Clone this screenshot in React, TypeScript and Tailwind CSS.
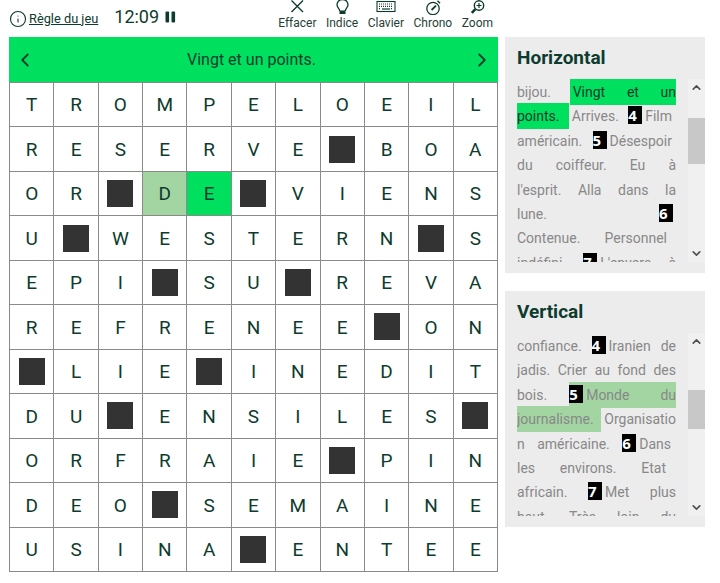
import React from 'react';
import { ChevronLeft, ChevronRight, ChevronUp, ChevronDown, Info } from 'lucide-react';

const rows = [
  'TROMPELOEIL',
  'RESERVE#BOA',
  'OR#DE#VIENS',
  'U#WESTERN#S',
  'EPI#SU#REVA',
  'REFRENEE#ON',
  '#LIE#INEDIT',
  'DU#ENSILES#',
  'ORFRAIE#PIN',
  'DEO#SEMAINE',
  'USINA#ENTEE',
];

const tools = [
  {
    label: 'Effacer',
    icon: <path d="M4.5 0.5 L16 12 M16 0.5 L4.5 12" strokeWidth="1.4" />,
  },
  {
    label: 'Indice',
    icon: (
      <>
        <path d="M7.8 11 C7.5 8.5 5 7.5 5 4.8 C5 1.8 7.4 -0.5 10.5 -0.5 C13.6 -0.5 16 1.8 16 4.8 C16 7.5 13.5 8.5 13.2 11" strokeWidth="1.3" />
        <rect x="7.5" y="10.5" width="6" height="3.5" fill="currentColor" stroke="none" />
      </>
    ),
  },
  {
    label: 'Clavier',
    icon: (
      <>
        <rect x="1" y="1.5" width="18" height="10" strokeWidth="1.1" />
        <path d="M3 4 H17 M3 6.3 H17 M3 8.6 H5 M15 8.6 H17" strokeWidth="1.2" strokeDasharray="1 1" />
        <path d="M6 9 H14" strokeWidth="1.2" />
      </>
    ),
  },
  {
    label: 'Chrono',
    icon: (
      <>
        <circle cx="10" cy="8.5" r="6.2" strokeWidth="1.3" />
        <path d="M14.5 0.8 L17 3.2" strokeWidth="1.4" />
        <path d="M8.6 10 L13 5.6" strokeWidth="1.8" />
      </>
    ),
  },
  {
    label: 'Zoom',
    icon: (
      <>
        <circle cx="12" cy="5.5" r="4.7" strokeWidth="1.4" />
        <path d="M12 3 V8 M9.5 5.5 H14.5" strokeWidth="1.2" />
        <path d="M8.4 9.2 L4.8 12.8" strokeWidth="2.6" />
      </>
    ),
  },
];

function Num({ n }: { n: number }) {
  return (
    <span className="inline-block bg-black text-white font-['Open_Sans',sans-serif] font-bold text-[15px] leading-[18px] w-[14px] h-[18px] text-center mr-[3px]">
      {n}
    </span>
  );
}

function Gap({ w }: { w: string }) {
  return <span className={`inline-block ${w}`} />;
}

function Cell({ ch, r, c }: { ch: string; r: number; c: number }) {
  let bg = 'bg-white';
  if (r === 2 && c === 3) bg = 'bg-[#a3d5a3]';
  if (r === 2 && c === 4) bg = 'bg-[#00e05f]';
  return (
    <div className={`flex items-center justify-center border-r border-b border-[#8a8a8a] text-[19px] text-[#0d3b2e] ${bg}`}>
      {ch === '#' ? <div className="w-[26px] h-[27px] bg-[#333333]" /> : <span className="pt-[2px]">{ch}</span>}
    </div>
  );
}

function ClueBox({ title, thumb, children }: { title: string; thumb: string; children: React.ReactNode }) {
  return (
    <section className="bg-[#ececec] h-[236px] flex flex-col">
      <h2 className="text-[19px] leading-[22px] font-bold text-[#0d3b2e] pl-3 pt-[10px] h-[42px]">{title}</h2>
      <div className="flex h-[183px]">
        <div className="w-[159px] ml-3 mr-3 pt-[1px] overflow-hidden text-[14px] leading-[24.4px] text-[#888888] text-justify [text-align-last:justify] whitespace-pre-line">
          {children}
        </div>
        <div className="w-[17px] bg-[#f0f0f0] flex flex-col items-center">
          <div className="h-[17px] flex items-center justify-center"><ChevronUp size={13} strokeWidth={3} className="text-[#505050]" /></div>
          <div className={`w-full bg-[#c8c8c8] ${thumb}`} />
          <div className="flex-1" />
          <div className="h-[17px] flex items-center justify-center"><ChevronDown size={13} strokeWidth={3} className="text-[#505050]" /></div>
        </div>
      </div>
    </section>
  );
}

export default function App() {
  return (
    <div className="w-[720px] h-[583px] bg-white flex font-['Roboto',sans-serif] overflow-hidden">
      <div className="w-[489px] ml-[9px] shrink-0">
        <header className="h-[37px] flex items-center text-[#0d3b2e]">
          <Info size={18} strokeWidth={1.5} />
          <a className="ml-[2px] text-[12.8px] underline">Règle du jeu</a>
          <span className="ml-[16px] mb-[4px] text-[18px]">12:09</span>
          <svg width="11" height="12" viewBox="0 0 11 12" className="ml-[6px] mb-[3px]" fill="currentColor">
            <rect x="0.5" y="0.5" width="3.6" height="11" rx="1" />
            <rect x="6.5" y="0.5" width="3.6" height="11" rx="1" />
          </svg>
          <div className="ml-auto flex gap-[9.5px] mr-[5px] self-start">
            {tools.map(t => (
              <div key={t.label} className="flex flex-col items-center text-[12px] leading-[14px] text-[#1f3f36]">
                <svg width="20" height="15" viewBox="0 0 20 15" fill="none" stroke="currentColor" className="text-[#0d3b2e]">
                  {t.icon}
                </svg>
                <span className="mt-[1px]">{t.label}</span>
              </div>
            ))}
          </div>
        </header>
        <div className="h-[45px] bg-[#00e05f] flex items-center justify-between px-[5px] text-[#0d3b2e]">
          <ChevronLeft size={22} strokeWidth={2} />
          <span className="text-[16px] mr-[4px]">Vingt et un points.</span>
          <ChevronRight size={22} strokeWidth={2} />
        </div>
        <div className="grid grid-cols-11 grid-rows-11 h-[490px] border-l border-t border-[#8a8a8a]">
          {rows.flatMap((row, r) => row.split('').map((ch, c) => <Cell key={`${r}-${c}`} ch={ch} r={r} c={c} />))}
        </div>
      </div>
      <aside className="w-[200px] ml-[7px] pt-[37px] flex flex-col gap-[18px]">
        <ClueBox title="Horizontal" thumb="mt-[22px] h-[46px]">
          <div>bijou. <span className="bg-[#00e05f] text-[#0d3b2e] pl-[3px] -ml-[3px] py-[5px]">Vingt et un</span></div>
          <div><span className="bg-[#00e05f] text-[#0d3b2e] py-[5px]">points. </span><span className="pl-[3px]">Arrives.</span> <Num n={4} />Film<Gap w="w-[4px]" /></div>
          <div>américain. <Num n={5} />Désespoir<Gap w="w-[4px]" /></div>
          <div>du coiffeur. Eu à</div>
          <div>l'esprit. Alla dans la</div>
          <div>lune. <Num n={6} /></div>
          <div>Contenue. Personnel<Gap w="w-[9px]" /></div>
          <div>indéfini. <Num n={7} />L'envers à</div>
        </ClueBox>
        <ClueBox title="Vertical" thumb="mt-[40px] h-[39px]">
          <div>confiance. <Num n={4} />Iranien de</div>
          <div>jadis. Crier au fond des</div>
          <div>bois. <span className="bg-[#a3d5a3] py-[5px] -ml-[9px]"><Num n={5} />Monde du</span></div>
          <div><span className="bg-[#a3d5a3] py-[5px]">journalisme. </span><span className="pl-[3px]">Organisatio</span></div>
          <div>n américaine. <Num n={6} />Dans<Gap w="w-[5px]" /></div>
          <div>les environs. Etat<Gap w="w-[10px]" /></div>
          <div>africain. <Num n={7} />Met plus</div>
          <div>haut. Très loin du</div>
        </ClueBox>
      </aside>
    </div>
  );
}
